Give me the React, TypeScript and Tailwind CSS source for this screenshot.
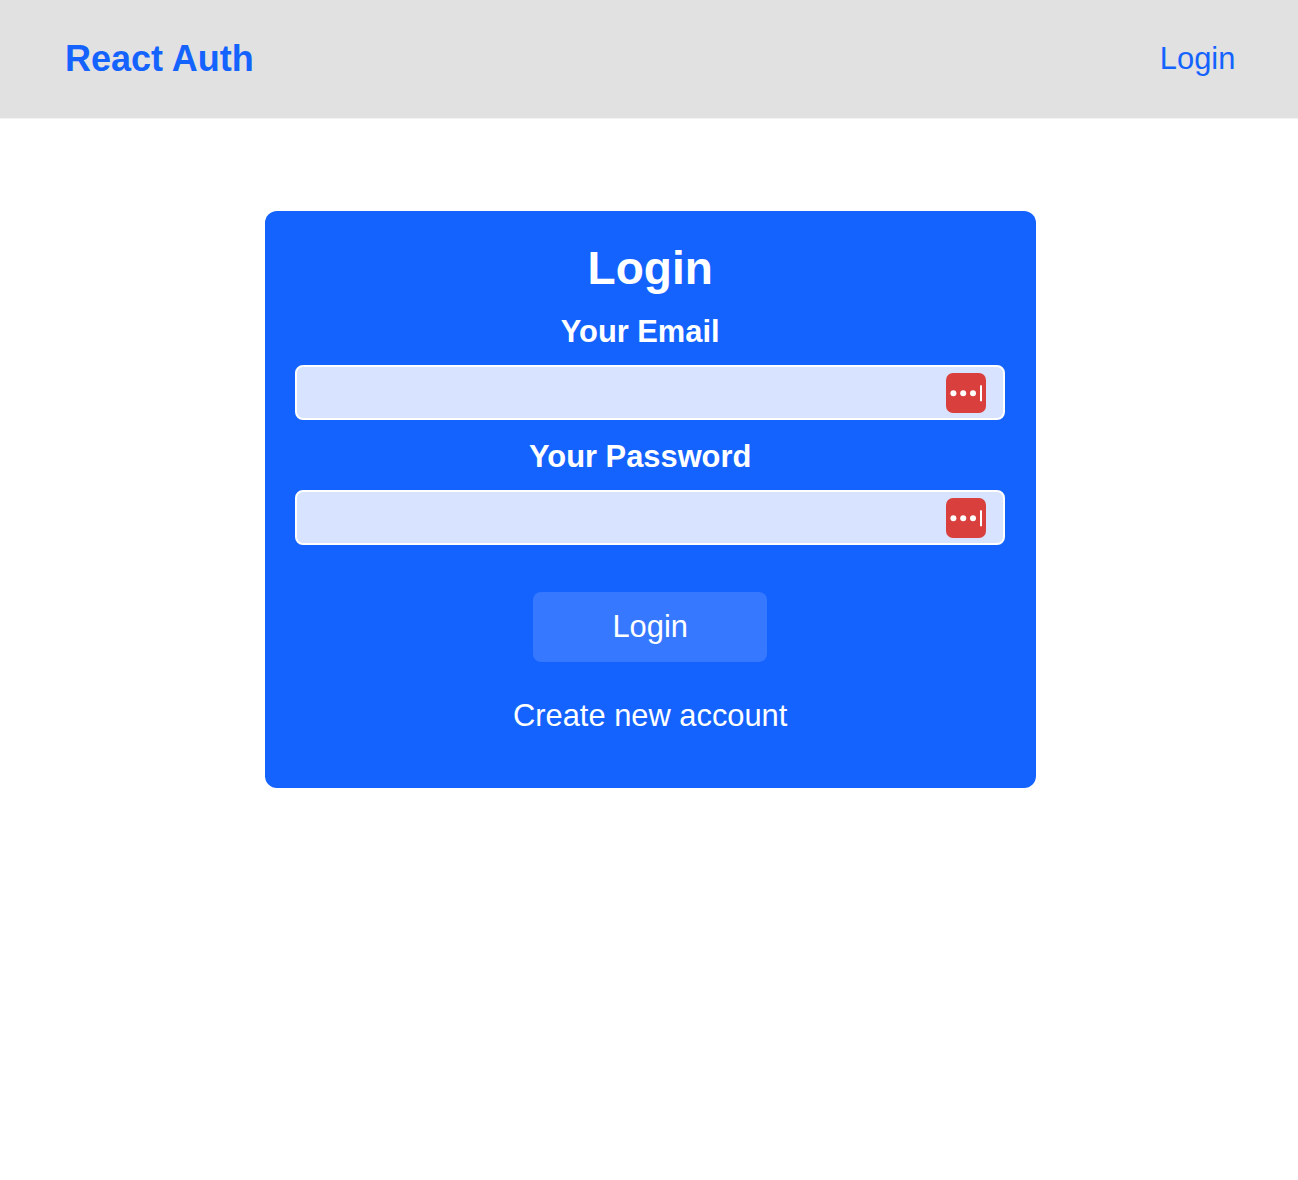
function ManagerIcon() {
  return (
    <svg className="h-10 w-10 shrink-0" viewBox="0 0 40 40" aria-hidden="true">
      <rect width="40" height="40" rx="7" fill="#d93f3c" />
      <circle cx="7.4" cy="20.3" r="3" fill="white" />
      <circle cx="17.2" cy="20.3" r="3" fill="white" />
      <circle cx="27" cy="20.3" r="3" fill="white" />
      <rect x="34" y="12.2" width="2" height="16" rx="0.5" fill="white" />
    </svg>
  );
}

function Field({ label, type }: { label: string; type: string }) {
  return (
    <div className="mb-[19px]">
      <label className="mb-[15px] block h-9 pr-5 text-center text-[30.85px] leading-9 font-bold">{label}</label>
      <div className="flex h-[55px] items-center rounded-lg border-2 border-white bg-[#d8e3ff] pr-[17px]">
        <input aria-label={label} type={type} className="h-full min-w-0 flex-1 bg-transparent px-2 text-[#1463ff] outline-none" />
        <ManagerIcon />
      </div>
    </div>
  );
}

export default function App() {
  return (
    <div className="min-h-[1180px] bg-white font-['Liberation_Sans',Arial,sans-serif]">
      <header className="flex h-[118px] items-center justify-between bg-[#e1e1e1] pr-[62.7px] pl-[65px] text-[#1463ff] shadow-[0_1px_0_#f2f2f2]">
        <div className="text-[36px] leading-10 font-bold">React Auth</div>
        <a href="#" className="text-[30.85px] leading-9">Login</a>
      </header>
      <main className="pt-[93px]">
        <section className="ml-[264.7px] flex h-[577.3px] w-[771px] flex-col rounded-xl bg-[#1463ff] px-[30.8px] pt-[31px] text-white">
          <h1 className="mb-[19.3px] text-center text-[46px] leading-[53px] font-bold">Login</h1>
          <form>
            <Field label="Your Email" type="email" />
            <Field label="Your Password" type="password" />
            <div className="mt-[46.3px] flex flex-col items-center">
              <button type="button" className="h-[70px] w-[233.5px] rounded-lg bg-[#3678ff] text-[30.85px] leading-9">Login</button>
              <a href="#" className="mt-[36px] text-[30.85px] leading-9">Create new account</a>
            </div>
          </form>
        </section>
      </main>
    </div>
  );
}
